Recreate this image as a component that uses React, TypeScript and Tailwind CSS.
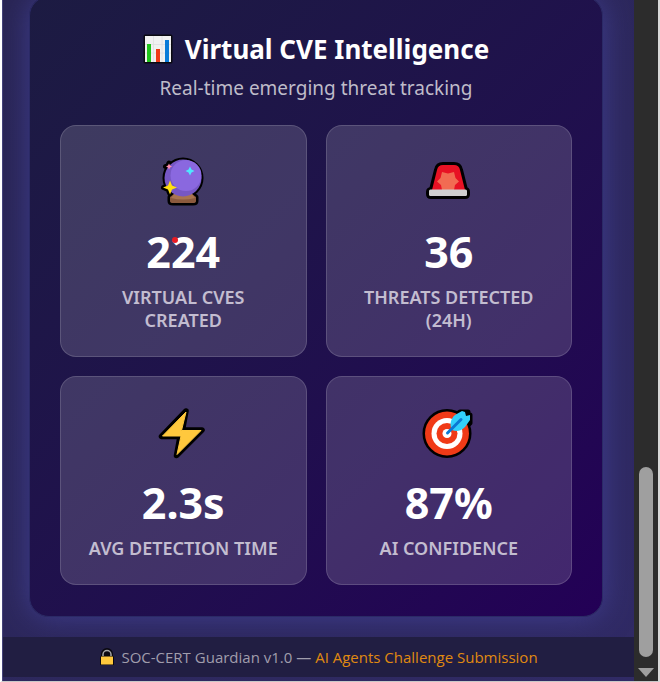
import type { ReactNode } from "react";

function ChartIcon() {
  return (
    <svg viewBox="0 0 30 30" className="size-[30px] shrink-0" aria-hidden="true">
      <rect x="0.5" y="0.5" width="29" height="29" rx="1.5" fill="#0b0a12" />
      <rect x="2" y="2" width="26" height="26" fill="#f1f1f1" />
      <path d="M2 10.5h26M2 19h26M10.5 2v26M19 2v26" stroke="#dfdfe2" strokeWidth="0.8" />
      <path d="M4 10h4v18H4z" fill="#1fc41c" />
      <path d="M13 15h4v13h-4z" fill="#f03a17" />
      <path d="M22 6h4v22h-4z" fill="#0a7bd8" />
    </svg>
  );
}

function CrystalBallIcon() {
  return (
    <svg viewBox="0 2 70 70" className="size-[70px]" aria-hidden="true">
      <g fill="#000" stroke="#000" strokeWidth="5" strokeLinejoin="round">
        <circle cx="35" cy="33" r="18" />
        <path d="M26 49h18l4 3v4q0 2-3 2H25q-3 0-3-2v-4z" />
        <path d="M22 36l2 4.500 4.500 2-4.500 2-2 4.500-2-4.500-4.500-2 4.500-2z" />
        <path d="M21 18l1 2.500 2.500 1-2.500 1-1 2.500-1-2.500-2.500-1 2.500-1z" />
      </g>
      <path d="M26 49h18l4 3v4q0 2-3 2H25q-3 0-3-2v-4z" fill="#8b5a3d" />
      <path d="M26 49h18l3 4q-12 3-24 0z" fill="#a97450" />
      <circle cx="35" cy="33" r="18.500" fill="#7657c4" />
      <ellipse cx="38" cy="30.500" rx="15.500" ry="15.500" fill="#8a68df" />
      <path d="M22 35.500l2 5 5 2-5 2-2 5-2-5-5-2 5-2z" fill="#ffdf12" />
      <path d="M42 21.500l1.500 3 3 1.500-3 1.500-1.500 3-1.500-3-3-1.500 3-1.500z" fill="#50e6ff" />
      <path d="M21 18.500l1 2 2 1-2 1-1 2-1-2-2-1 2-1z" fill="#ff8dae" />
    </svg>
  );
}

function SirenIcon() {
  return (
    <svg viewBox="0 2 70 70" className="size-[70px]" aria-hidden="true">
      <path
        d="M18 45l5-20q1-5 6-5h11q5 0 6 5l5 20q2 0 2 2v2q0 2-2 2H17q-2 0-2-2v-2q0-2 3-2z"
        fill="#000"
        stroke="#000"
        strokeWidth="6"
        strokeLinejoin="round"
      />
      <path d="M18 45l5-20q1-5 6-5h11q5 0 6 5l5 20z" fill="#e81224" />
      <path
        d="M28 27l6 1.500 6-1.500 1.500 6 3.500 3.500-4 3.500-1 5H28l-1-5-4-3.500 3.500-3.500z"
        fill="#f26b52"
      />
      <rect x="15" y="44.500" width="38" height="6.500" rx="1.500" fill="#cfcfcf" />
    </svg>
  );
}

function BoltIcon() {
  return (
    <svg viewBox="0 0 70 70" className="size-[70px]" aria-hidden="true">
      <path
        d="M38 13L13.500 38.500H32L28.500 57.500L54 32H34.500z"
        fill="#000"
        stroke="#000"
        strokeWidth="5.500"
        strokeLinejoin="round"
      />
      <path
        d="M38 14L14.500 38H33L29 56.500L53 32.500H33.500z"
        fill="#ffc83d"
        stroke="#ffc83d"
        strokeWidth="1"
        strokeLinejoin="round"
      />
    </svg>
  );
}

function TargetIcon() {
  return (
    <svg viewBox="0 0 70 70" className="size-[70px]" aria-hidden="true">
      <g fill="#000" stroke="#000" strokeWidth="5" strokeLinejoin="round">
        <circle cx="33" cy="35.500" r="22" />
        <path d="M38 27v-7l8-6h8v3h2v8l-7 7h-8z" />
      </g>
      <circle cx="33" cy="35.500" r="22" fill="#f03a17" />
      <circle cx="33" cy="35.500" r="15.500" fill="#fff" />
      <circle cx="33" cy="35.500" r="10.500" fill="#f03a17" />
      <circle cx="33" cy="35.500" r="4.500" fill="#fff" />
      <path d="M38 32c-3-5-1-12 3-15l7-4 3 1 1 4 4-1v5l-5 7c-4 4-8 5-13 3z" fill="#32d0fb" />
      <path d="M33.500 35L47 21.500" stroke="#0b78d4" strokeWidth="3" strokeLinecap="round" />
    </svg>
  );
}

function LockIcon() {
  return (
    <svg viewBox="0 0 16 18" className="h-[18px] w-4 shrink-0" aria-hidden="true">
      <path d="M2 8V6a6 6 0 0 1 12 0v2l1 1v8H1V9z" fill="#0a0810" />
      <path d="M4 8V6.500a4 4 0 0 1 8 0V8" fill="none" stroke="#a6a6a6" strokeWidth="1.500" />
      <rect x="2" y="8.500" width="12" height="8" rx="0.500" fill="#ffc83d" />
    </svg>
  );
}

type Stat = { icon: ReactNode; value: string; label: string; alert?: boolean };

const stats: Stat[] = [
  { icon: <CrystalBallIcon />, value: "224", label: "Virtual CVEs Created", alert: true },
  { icon: <SirenIcon />, value: "36", label: "Threats Detected (24h)" },
  { icon: <BoltIcon />, value: "2.3s", label: "Avg Detection Time" },
  { icon: <TargetIcon />, value: "87%", label: "AI Confidence" },
];

function StatCard({ icon, value, label, alert }: Stat) {
  return (
    <article className="flex flex-col items-center rounded-2xl border border-white/15 bg-white/15 px-6 py-6 text-center">
      <div className="flex h-16 items-center justify-center">{icon}</div>
      <p className="relative mt-2 mb-1 text-[43px] leading-[60px] font-bold text-white">
        {value}
        {alert && <span className="absolute top-[15px] left-[26px] size-1.5 rounded-full bg-[#e81c24]" />}
      </p>
      <p className="text-[18px] leading-[23px] font-semibold text-[#c3bdd0] uppercase">{label}</p>
    </article>
  );
}

function Scrollbar() {
  return (
    <div className="flex w-6 shrink-0 flex-col items-center justify-end bg-[#2c2c2c]" aria-hidden="true">
      <div className="h-[190px] w-3.5 rounded-full bg-[#9f9f9f]" />
      <svg viewBox="0 0 16 9" className="mt-[11px] mb-1 h-[9px] w-4">
        <path d="M0 0h16L8 9z" fill="#9f9f9f" />
      </svg>
    </div>
  );
}

export default function App() {
  return (
    <div className="flex min-h-screen overflow-hidden border-r-2 border-b-2 border-l-2 border-r-[#d8d8d8] border-b-[#c8c8c8] border-l-white bg-[#2c2c2c] font-['Noto_Sans','Open_Sans',sans-serif]">
      <div className="flex min-w-0 flex-1 flex-col border-l border-[#45437a] bg-linear-to-br from-[#292554] to-[#302a65]">
        <main className="pr-[31px] pb-5 pl-[26px]">
          <section className="-mt-1 rounded-[20px] border border-[#2b2a66] bg-linear-135 from-[#1c1b42] to-[#230056] px-[30px] pt-[34px] pb-[31px] shadow-[0_0_30px_rgba(75,75,175,0.6)]">
            <header className="mb-[21px] text-center">
              <h1 className="flex items-center justify-center gap-3 text-[26px] leading-9 font-bold text-white">
                <ChartIcon />
                Virtual CVE Intelligence
              </h1>
              <p className="mt-[5px] text-[19px] leading-8 text-[#bfbcc9]">Real-time emerging threat tracking</p>
            </header>
            <div className="grid grid-cols-2 gap-[19px]">
              {stats.map((stat) => (
                <StatCard key={stat.label} {...stat} />
              ))}
            </div>
          </section>
        </main>
        <footer className="relative mb-1 flex h-10 items-center justify-center gap-1.5 bg-[#211e42] font-['Open_Sans','Noto_Sans',sans-serif] text-[15px] text-[#a09dac]">
          <LockIcon />
          <p>
            SOC-CERT Guardian v1.0 —{" "}
            <a href="#submission" className="text-[#e08a10]">
              AI Agents Challenge Submission
            </a>
          </p>
        </footer>
      </div>
      <Scrollbar />
    </div>
  );
}
